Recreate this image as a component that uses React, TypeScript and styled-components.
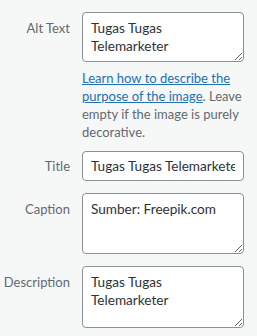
import React from 'react';
import styled, { createGlobalStyle } from 'styled-components';

const Global = createGlobalStyle`
  html, body {
    margin: 0;
    padding: 0;
    background: #f6f7f7;
  }
  body {
    font-family: Lato, "Noto Sans", sans-serif;
    -webkit-font-smoothing: antialiased;
  }
`;

const Panel = styled.div`
  display: grid;
  grid-template-columns: 70px 162px;
  column-gap: 12px;
  row-gap: 12px;
  padding: 12px 0 0 0;
  align-items: start;
`;

const Label = styled.label`
  text-align: right;
  font-size: 13px;
  line-height: 16px;
  color: #646970;
  padding-top: ${props => (props.$single ? '7px' : '8px')};
`;

const Field = styled.div`
  display: flex;
  flex-direction: column;
`;

const fieldBase = `
  box-sizing: border-box;
  width: 100%;
  border: 1px solid #8c8f94;
  border-radius: 4px;
  background: #fff;
  color: #2c3338;
  font-family: Lato, "Noto Sans", sans-serif;
  font-size: 13.6px;
  margin: 0;
  &:focus {
    outline: none;
  }
`;

const TextArea = styled.textarea`
  ${fieldBase}
  height: ${props => props.$h}px;
  padding: 7px 8px;
  line-height: 17.5px;
  resize: vertical;
  overflow: hidden;
`;

const Input = styled.input`
  ${fieldBase}
  height: 30px;
  padding: 0 8px;
  line-height: 28px;
`;

const Help = styled.p`
  margin: 7px 0 -2px 0;
  font-size: 13px;
  line-height: 18px;
  color: #646970;
`;

const HelpLink = styled.a`
  color: #2271b1;
  text-decoration: underline;
`;

const App = () => {
  return (
    <>
      <Global />
      <Panel>
        <Label>Alt Text</Label>
        <Field>
          <TextArea $h={50} defaultValue="Tugas Tugas Telemarketer" />
          <Help>
            <HelpLink href="#">Learn how to describe the purpose of the image</HelpLink>. Leave empty if the image is purely decorative.
          </Help>
        </Field>

        <Label $single>Title</Label>
        <Field>
          <Input defaultValue="Tugas Tugas Telemarketer" />
        </Field>

        <Label>Caption</Label>
        <Field>
          <TextArea $h={61} defaultValue="Sumber: Freepik.com" />
        </Field>

        <Label>Description</Label>
        <Field>
          <TextArea $h={62} defaultValue="Tugas Tugas Telemarketer" />
        </Field>
      </Panel>
    </>
  );
};

export default App;
